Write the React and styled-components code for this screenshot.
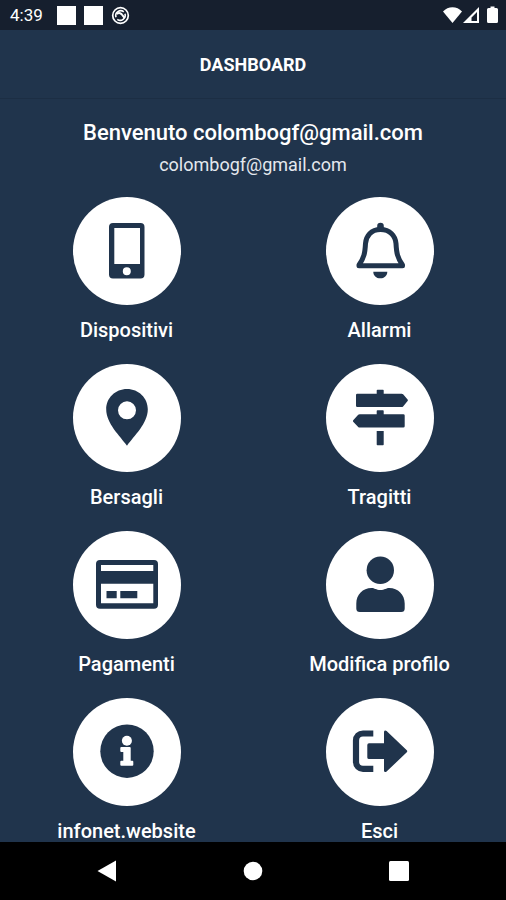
import styled, { createGlobalStyle } from "styled-components";

const NAVY = "#20344c";

const GlobalStyle = createGlobalStyle`
  * {
    box-sizing: border-box;
  }

  body {
    margin: 0;
    background: ${NAVY};
    color: #fff;
    font-family: Roboto, "Liberation Sans", sans-serif;
  }
`;

const Screen = styled.div`
  display: flex;
  flex-direction: column;
  height: 100vh;
`;

const StatusBar = styled.div`
  display: flex;
  align-items: center;
  justify-content: space-between;
  height: 30px;
  padding: 0 8px 0 10px;
  background: #161f2e;
`;

const StatusGroup = styled.div`
  display: flex;
  align-items: center;
  gap: ${({ $gap }) => $gap}px;
`;

const Clock = styled.span`
  margin-right: 6px;
  font-size: 17px;
  line-height: 20px;
`;

const Notification = styled.span`
  width: 19px;
  height: 19px;
  background: #fff;
`;

const Header = styled.header`
  padding: 25px 16px 23px;
  border-bottom: 1px solid #1c2e44;
  text-align: center;
`;

const Title = styled.h1`
  margin: 0;
  font-size: 18px;
  font-weight: 700;
  line-height: 20px;
`;

const Content = styled.main`
  flex: 1;
  min-height: 0;
  overflow-y: auto;
  scrollbar-width: none;
`;

const Welcome = styled.h2`
  margin: 20px 0 0;
  font-size: 22px;
  font-weight: 500;
  line-height: 28px;
  text-align: center;
`;

const Email = styled.p`
  margin: 4px 0 18px;
  color: #e4e8ee;
  font-size: 18px;
  line-height: 28px;
  text-align: center;
`;

const MenuGrid = styled.div`
  display: grid;
  grid-template-columns: repeat(2, 1fr);
  row-gap: 23px;
`;

const MenuButton = styled.button`
  display: flex;
  flex-direction: column;
  align-items: center;
  gap: 14px;
  padding: 0;
  border: 0;
  background: none;
  color: #fff;
  font-family: inherit;
  font-size: 20px;
  font-weight: 500;
  line-height: 22px;
  cursor: pointer;
`;

const Circle = styled.span`
  width: 108px;
  height: 108px;
  border-radius: 50%;
  background: #fff;
  color: ${NAVY};

  svg {
    display: block;
  }
`;

const NavBar = styled.nav`
  display: flex;
  align-items: center;
  justify-content: space-around;
  height: 58px;
  padding: 0 34px;
  background: #000;
`;

const NavButton = styled.button`
  display: flex;
  padding: 0;
  border: 0;
  background: none;
  color: #fff;
  cursor: pointer;
`;

const icons = {
  phone: (
    <path
      fillRule="evenodd"
      d="M40 26h27.500a4 4 0 0 1 4 4v47.500a4 4 0 0 1-4 4H40a4 4 0 0 1-4-4V30a4 4 0 0 1 4-4zM41.300 31v36h25.700V31zM53.800 70.300a4 4 0 1 0 0 8 4 4 0 0 0 0-8z"
    />
  ),
  bell: (
    <>
      <path
        fill="none"
        stroke="currentColor"
        strokeWidth="5"
        strokeLinejoin="round"
        d="M54.500 32.500c-9.500 0-14.500 6.500-15 14-.500 9.500-1.500 14.500-6.500 21.500v.700h43.500V68c-5-7-6-12-6.500-21.500-.500-7.500-6-14-15.500-14z"
      />
      <path d="M51.200 33v-4a3.300 3.300 0 0 1 6.600 0v4zM47.300 74.700h14c0 4-3 6.600-7 6.600s-7-2.600-7-6.600z" />
    </>
  ),
  pin: (
    <path
      fillRule="evenodd"
      d="M54 25c-11.600 0-20.800 9-20.800 20.300C33.200 59.500 47 72 54 81.700 61 72 74.800 59.500 74.800 45.300 74.800 34 65.600 25 54 25zm0 12.300a9 9 0 1 1 0 18 9 9 0 0 1 0-18z"
    />
  ),
  signs: (
    <path d="M51.500 25.700h5.500q.700 0 .700.700v3.300h18q.800 0 1.400.600l4.500 5.200q.700.800 0 1.600l-4.500 5.300q-.600.700-1.400.700H31.300q-1.300 0-1.300-1.300V31q0-1.300 1.300-1.300h19.400v-3.300q0-.700.800-.700zM51.500 46.300h5.500q.700 0 .700.700v3.200h19.600q1.400 0 1.400 1.300v10.800q0 1.300-1.400 1.300H33.700q-.900 0-1.500-.600l-5-5.300q-.600-.800 0-1.500l5-5.400q.600-.600 1.500-.600h17V47q0-.700.800-.700zM50.700 67h7v13.500q0 .800-.700.800h-5.500q-.800 0-.800-.800z" />
  ),
  card: (
    <path
      fillRule="evenodd"
      d="M27 29h54a4 4 0 0 1 4 4v40.700a4 4 0 0 1-4 4H27a4 4 0 0 1-4-4V33a4 4 0 0 1 4-4zM28 34v6h52.300v-6zM28 52.700v19.600h52.300V52.700zM33.500 60h10.200v7.300H33.500zM47.300 60h17v7.300h-17z"
    />
  ),
  person: (
    <>
      <circle cx="54.300" cy="39.300" r="13.700" />
      <path d="M45.500 57c3.200 0 4.500 2 8.900 2s5.700-2 8.900-2c8.700 0 15.400 6.500 15.400 15.500v5a3.500 3.500 0 0 1-3.500 3.500H33.800a3.500 3.500 0 0 1-3.500-3.500v-5c0-9 6.500-15.500 15.200-15.500z" />
    </>
  ),
  info: (
    <>
      <circle cx="54" cy="53.200" r="26.700" />
      <circle cx="53.900" cy="42.700" r="5" fill="#fff" />
      <path
        fill="#fff"
        d="M48.300 49h8.400q1 0 1 1v12.700h1.600q1 0 1 1v3q0 1-1 1h-11q-1 0-1-1v-3q0-1 1-1h2V54h-2q-1 0-1-1v-3q0-1 1-1z"
      />
    </>
  ),
  exit: (
    <>
      <path
        fill="none"
        stroke="currentColor"
        strokeWidth="6.200"
        d="M47.300 35.500H37a7 7 0 0 0-7 7v21.300a7 7 0 0 0 7 7h10.300"
      />
      <path d="M43 45.300h15V34c0-1.500 1.500-2 2.600-1l20.200 19.300q.900 1 0 2L60.600 73.500c-1.100 1-2.600.500-2.600-1V61H43q-1.700 0-1.700-1.500V47q0-1.700 1.700-1.700z" />
    </>
  ),
};

const menuItems = [
  { icon: "phone", label: "Dispositivi" },
  { icon: "bell", label: "Allarmi" },
  { icon: "pin", label: "Bersagli" },
  { icon: "signs", label: "Tragitti" },
  { icon: "card", label: "Pagamenti" },
  { icon: "person", label: "Modifica profilo" },
  { icon: "info", label: "infonet.website" },
  { icon: "exit", label: "Esci" },
];

function SyncIcon() {
  return (
    <svg width="19" height="19" viewBox="0 0 19 19" fill="none" stroke="#fff" aria-hidden="true">
      <circle cx="9.500" cy="9.500" r="7.800" strokeWidth="1.700" />
      <path d="M5 11.300a5 5 0 0 1 7.800-5.500M14 7.800a5 5 0 0 1-7.700 5.500" strokeWidth="1.600" />
      <path d="M5.800 7.800c2.500-1.600 4.500-.300 5.300 1l2.600 3.400" strokeWidth="2" />
    </svg>
  );
}

function App() {
  return (
    <>
      <GlobalStyle />
      <Screen>
        <StatusBar>
          <StatusGroup $gap={8}>
            <Clock>4:39</Clock>
            <Notification />
            <Notification />
            <SyncIcon />
          </StatusGroup>
          <StatusGroup $gap={1}>
            <svg width="19" height="18" viewBox="0 0 19 18" fill="#fff" aria-hidden="true">
              <path d="M0 5.500C5-.200 14-.200 19 5.500L9.500 17z" />
            </svg>
            <svg width="17" height="18" viewBox="0 0 17 18" aria-hidden="true">
              <path fill="#fff" fillRule="evenodd" d="M0 17 16 1v16zM8.500 15H14V6L8.500 11.500z" />
            </svg>
            <svg width="17" height="18" viewBox="0 0 17 18" fill="#fff" aria-hidden="true">
              <path d="M7.500 2h2V.500h4V2h2q1.500 0 1.500 1.500v12q0 1.500-1.500 1.500h-8q-1.500 0-1.500-1.500v-12Q6 2 7.500 2z" />
            </svg>
          </StatusGroup>
        </StatusBar>

        <Header>
          <Title>DASHBOARD</Title>
        </Header>

        <Content>
          <Welcome>Benvenuto colombogf@gmail.com</Welcome>
          <Email>colombogf@gmail.com</Email>
          <MenuGrid>
            {menuItems.map((item) => (
              <MenuButton key={item.icon} type="button">
                <Circle>
                  <svg width="108" height="108" viewBox="0 0 108 108" fill="currentColor" aria-hidden="true">
                    {icons[item.icon]}
                  </svg>
                </Circle>
                {item.label}
              </MenuButton>
            ))}
          </MenuGrid>
        </Content>

        <NavBar>
          <NavButton type="button" aria-label="Indietro">
            <svg width="20" height="22" viewBox="0 0 20 22" fill="currentColor">
              <path d="M19 .500v21L.500 11z" />
            </svg>
          </NavButton>
          <NavButton type="button" aria-label="Home">
            <svg width="20" height="20" viewBox="0 0 20 20" fill="currentColor">
              <circle cx="10" cy="10" r="9.300" />
            </svg>
          </NavButton>
          <NavButton type="button" aria-label="Recenti">
            <svg width="20" height="20" viewBox="0 0 20 20" fill="currentColor">
              <rect width="20" height="20" rx="1.500" />
            </svg>
          </NavButton>
        </NavBar>
      </Screen>
    </>
  );
}

export default App;
